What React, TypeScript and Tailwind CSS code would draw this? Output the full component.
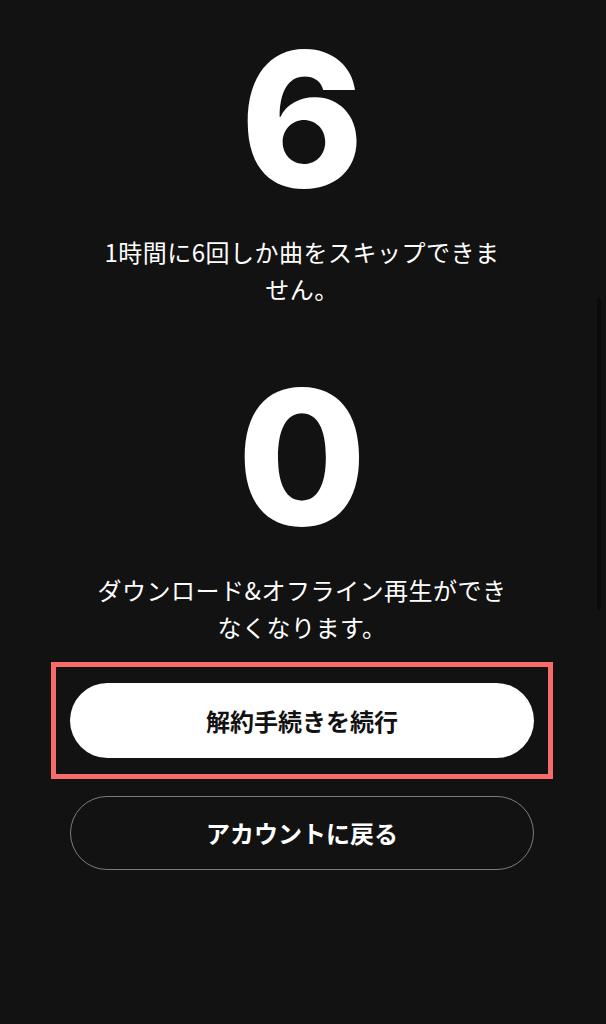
/**
 * CancelConfirm — last-step screen shown before a plan is cancelled.
 * Lists what the user loses, then offers to continue or go back.
 */

const jp = "font-['Noto_Sans_CJK_JP','Noto_Sans',sans-serif]"

const losses = [
  { value: '6', text: '1時間に6回しか曲をスキップできません。' },
  { value: '0', text: 'ダウンロード&オフライン再生ができなくなります。' },
]

function LossItem({ value, text, first }: { value: string; text: string; first?: boolean }) {
  return (
    <div className={`flex flex-col items-center ${first ? '' : 'mt-[57px]'}`}>
      <div className="font-['Inter',sans-serif] text-[187px] font-extrabold leading-none text-white">
        {value}
      </div>
      <p className={`${jp} mt-[20px] w-[413px] text-center text-[24px] leading-[37px] tracking-[0.5px] text-white`}>
        {text}
      </p>
    </div>
  )
}

export default function App() {
  return (
    <div className="relative h-[1024px] w-full overflow-hidden bg-[#121212]">
      <div className="flex flex-col items-center pr-[2px] pt-[26px]">
        {losses.map((item, i) => (
          <LossItem key={item.value} value={item.value} text={item.text} first={i === 0} />
        ))}

        {/* Highlight around the primary action */}
        <div className="mt-[17px] border-[5px] border-[#f76b6b] px-[14px] py-[16px]">
          <button
            className={`${jp} flex h-[75px] w-[464px] items-center justify-center rounded-full bg-white text-[24px] font-bold text-[#121212]`}
          >
            解約手続きを続行
          </button>
        </div>

        <button
          className={`${jp} mt-[17px] flex h-[74px] w-[464px] items-center justify-center rounded-full border-[1.5px] border-[#7c7c7c] text-[24px] font-bold text-white`}
        >
          アカウントに戻る
        </button>
      </div>

      {/* Overlay scrollbar thumb */}
      <div className="absolute right-[5px] top-[298px] h-[312px] w-[4px] rounded-full bg-[#0a0a0a]" />
    </div>
  )
}
